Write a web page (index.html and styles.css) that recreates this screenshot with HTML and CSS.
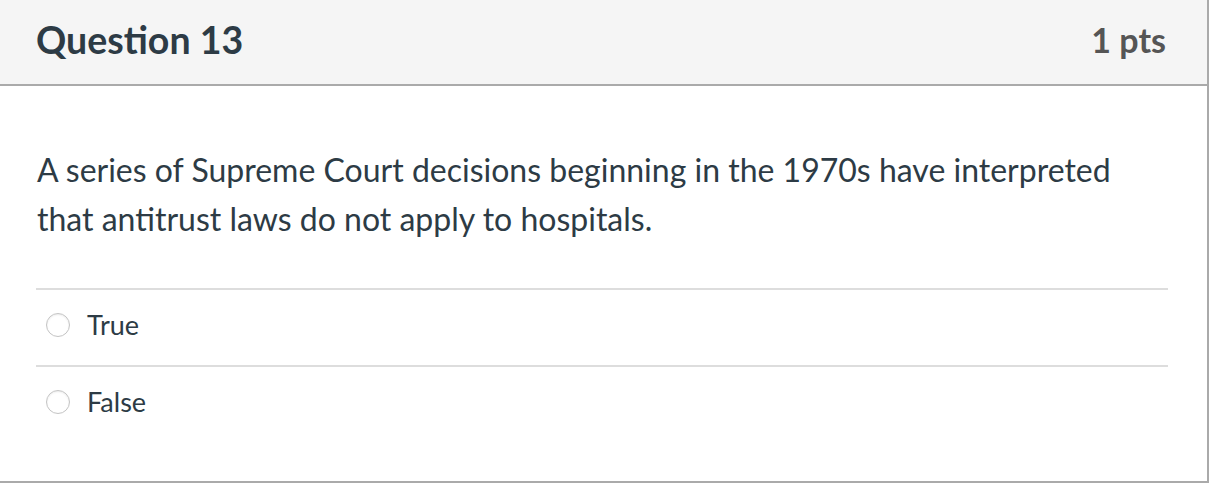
FILE: index.html
```html
<!DOCTYPE html>
<html>
<head>
<meta charset="utf-8">
<link rel="stylesheet" href="styles.css">
</head>
<body>
<div class="card">
  <div class="header">
    <h2 class="title">Question 13</h2>
    <div class="pts">1 pts</div>
  </div>
  <div class="content">
    <p class="question">A series of Supreme Court decisions beginning in the 1970s have interpreted that antitrust laws do not apply to hospitals.</p>
    <div class="answers">
      <label class="answer"><span class="radio"></span><span class="label">True</span></label>
      <label class="answer"><span class="radio"></span><span class="label">False</span></label>
    </div>
  </div>
</div>
</body>
</html>
```
FILE: styles.css
```css
html, body {
  margin: 0;
  padding: 0;
  background: #fff;
}
body {
  font-family: Lato, "Open Sans", sans-serif;
  color: #2d3b45;
}
.card {
  width: 1207px;
  height: 481px;
  border-right: 2px solid #aaaaaa;
  border-bottom: 2px solid #aaaaaa;
  display: flex;
  flex-direction: column;
}
.header {
  height: 86px;
  background: #f5f5f5;
  border-bottom: 2px solid #aaaaaa;
  display: flex;
  align-items: center;
  justify-content: space-between;
  padding: 0 41px 5px 36px;
  box-sizing: border-box;
  flex: none;
}
.title {
  margin: 0;
  font-size: 37.5px;
  font-weight: 700;
  color: #2d3b45;
}
.pts {
  font-size: 34px;
  font-weight: 700;
  color: #555;
}
.content {
  padding: 0 39px 0 36px;
}
.question {
  margin: 59px 0 0 1px;
  font-size: 32px;
  line-height: 49px;
}
.answers {
  margin-top: 45px;
}
.answer {
  display: flex;
  align-items: center;
  height: 75px;
  padding-bottom: 6px;
  box-sizing: border-box;
  height: 77px;
  border-top: 2px solid #dddddd;
}
.radio {
  width: 22px;
  height: 22px;
  border-radius: 50%;
  border: 1px solid #c4c4c4;
  box-shadow: inset 0 1px 2px rgba(0,0,0,0.08);
  margin-left: 10px;
  margin-right: 17px;
  background: #fff;
}
.label {
  font-size: 27px;
}
```
